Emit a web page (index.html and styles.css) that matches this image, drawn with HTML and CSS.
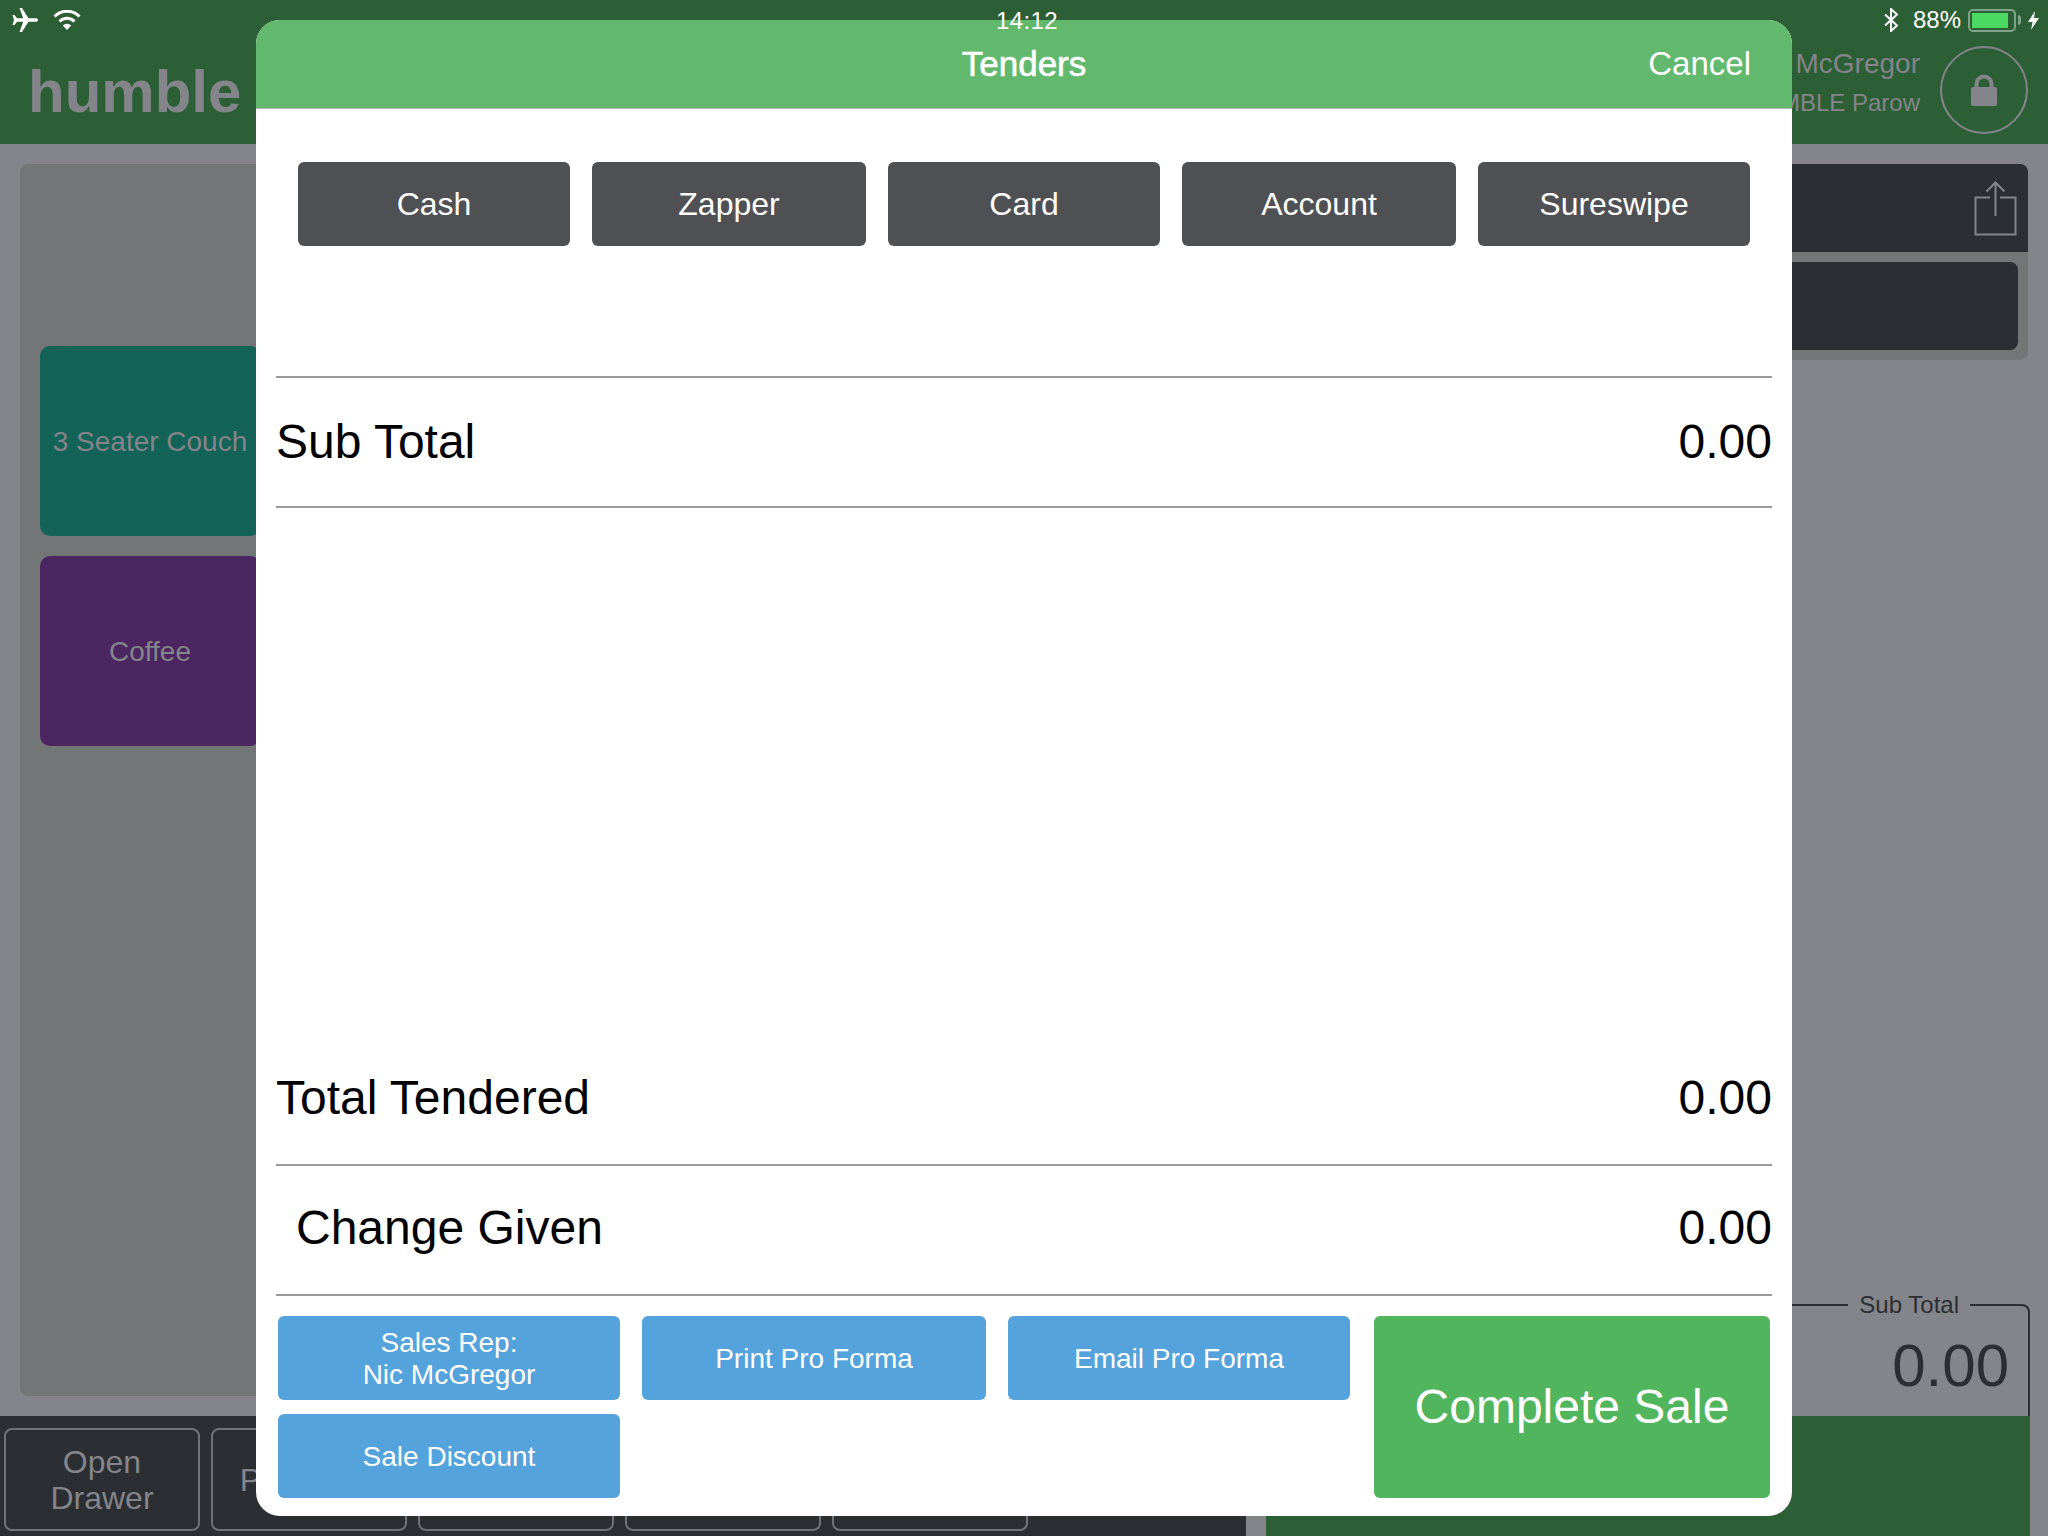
FILE: index.html
```html
<!DOCTYPE html>
<html>
<head>
<meta charset="utf-8">
<title>Tenders</title>
<link rel="stylesheet" href="styles.css">
</head>
<body>
<div class="app">

	<div class="topbar">
		<div class="brand">humble</div>
		<div class="user">
			<div class="user-name">Nic McGregor</div>
			<div class="user-store">HUMBLE Parow</div>
		</div>
		<div class="lock">
			<svg width="26" height="32" viewBox="0 0 26 32"><path d="M5.500 15V10a7.500 7.500 0 0 1 15 0v5" fill="none" stroke="#84858a" stroke-width="4"/><rect x="0" y="13" width="26" height="19" rx="2" fill="#84858a"/></svg>
		</div>
	</div>

	<div class="main">
		<div class="products">
			<div class="tile tile-teal">3 Seater Couch</div>
			<div class="tile tile-purple">Coffee</div>
		</div>
		<div class="side">
			<div class="side-head">
				<svg width="43" height="55" viewBox="0 0 43 55"><path d="M16 16.500H1.500V53.500H41.500V16.500H26M21.500 35V1.500M12.500 10.500l9-9 9 9" fill="none" stroke="#84858a" stroke-width="2"/></svg>
			</div>
			<div class="side-body"><div class="side-inner"></div></div>
			<div class="side-space"></div>
			<div class="subtotal">
				<div class="subtotal-label">Sub Total</div>
				<div class="subtotal-value">0.00</div>
			</div>
		</div>
	</div>

	<div class="bottom">
		<div class="actions">
			<div class="action">Open<br>Drawer</div>
			<div class="action">Park Sale</div>
			<div class="action"></div>
			<div class="action"></div>
			<div class="action"></div>
		</div>
		<div class="bottom-gap"></div>
		<div class="bottom-green"></div>
	</div>

	<!-- status bar sits over the modal -->
	<div class="status">
		<div class="status-left">
			<svg width="28" height="26" viewBox="0 0 28 26"><path d="M27 12.900c0-1-1-1.600-2.500-1.600h-7L11 1H8.500l3.700 10.300H6L3.500 8H1.500L3 13 1.500 18h2L6 14.700h6.200L8.500 25H11l6.500-10.300h7c1.500 0 2.500-.8 2.500-1.800z" fill="#fff"/></svg>
			<svg width="28" height="20" viewBox="0 0 28 20"><path d="M1.500 6.500a17.500 17.500 0 0 1 25 0M6.500 11.500a10.500 10.500 0 0 1 15 0" fill="none" stroke="#fff" stroke-width="3"/><path d="M14 20l-4.200-4.500a6 6 0 0 1 8.400 0z" fill="#fff"/></svg>
		</div>
		<div class="status-time">14:12</div>
		<div class="status-right">
			<svg class="bluetooth" width="16" height="24" viewBox="0 0 16 24"><path d="M2 6.500l12 11L8 23V1l6 5.500-12 11" fill="none" stroke="#fff" stroke-width="2"/></svg>
			<span class="status-pct">88%</span>
			<span class="battery-wrap">
				<span class="battery"><span class="battery-fill"></span></span>
				<span class="battery-nub"></span>
			</span>
			<svg width="11" height="19" viewBox="0 0 11 19"><path d="M7 0L0 11h4.500L3 19l8-12H6z" fill="#fff"/></svg>
		</div>
	</div>

	<div class="modal">
		<div class="modal-head">
			<div class="modal-title">Tenders</div>
			<div class="modal-cancel">Cancel</div>
		</div>
		<div class="modal-body">
			<div class="tenders">
				<div class="btn btn-dark">Cash</div>
				<div class="btn btn-dark">Zapper</div>
				<div class="btn btn-dark">Card</div>
				<div class="btn btn-dark">Account</div>
				<div class="btn btn-dark">Sureswipe</div>
			</div>
			<div class="line line-sub"><span>Sub Total</span><span>0.00</span></div>
			<div class="spacer"></div>
			<div class="line line-tendered"><span>Total Tendered</span><span>0.00</span></div>
			<div class="line line-change"><span>Change Given</span><span>0.00</span></div>
			<div class="footer">
				<div class="btn btn-blue">Sales Rep:<br>Nic McGregor</div>
				<div class="btn btn-blue">Print Pro Forma</div>
				<div class="btn btn-blue">Email Pro Forma</div>
				<div class="btn btn-green">Complete Sale</div>
				<div class="btn btn-blue">Sale Discount</div>
			</div>
		</div>
	</div>

</div>
</body>
</html>
```
FILE: styles.css
```css
* {
	box-sizing: border-box;
}

html, body {
	margin: 0;
	padding: 0;
}

body {
	font-family: "Liberation Sans", Arial, sans-serif;
	background: #84858a;
}

.app {
	position: relative;
	width: 2048px;
	height: 1536px;
	overflow: hidden;
	display: flex;
	flex-direction: column;
}

/* top bar */
.topbar {
	height: 144px;
	background: #2c5f36;
	display: flex;
	align-items: flex-end;
	padding: 0 20px 10px 28px;
	color: #84858a;
}

.brand {
	font-size: 60px;
	font-weight: bold;
	line-height: 72px;
	margin-bottom: 6px;
	flex: 1;
}

.user {
	text-align: right;
	margin-right: 20px;
	margin-bottom: 12px;
}

.user-name {
	font-size: 28px;
	line-height: 40px;
}

.user-store {
	font-size: 24px;
	line-height: 38px;
}

.lock {
	width: 88px;
	height: 88px;
	border: 2px solid #84858a;
	border-radius: 50%;
	display: flex;
	align-items: center;
	justify-content: center;
}

/* main area */
.main {
	height: 1272px;
	display: flex;
	padding: 20px;
}

.products {
	width: 1340px;
	height: 1232px;
	background: #727677;
	border-radius: 8px;
	padding: 182px 20px 0;
}

.tile {
	width: 220px;
	height: 190px;
	margin-bottom: 20px;
	padding-top: 2px;
	border-radius: 10px;
	color: #84858a;
	font-size: 28px;
	display: flex;
	align-items: center;
	justify-content: center;
}

.tile-teal {
	background: #136358;
}

.tile-purple {
	background: #4b2660;
}

.side {
	flex: 1;
	margin-left: 20px;
	display: flex;
	flex-direction: column;
}

.side-head {
	height: 88px;
	background: #2b2e33;
	border-radius: 8px 8px 0 0;
	display: flex;
	justify-content: flex-end;
	align-items: center;
	padding-right: 11px;
}

.side-body {
	height: 108px;
	background: #727677;
	border-radius: 0 0 8px 8px;
	padding: 10px;
}

.side-inner {
	height: 88px;
	background: #2b2e33;
	border-radius: 8px;
}

.side-space {
	flex: 1;
}

.subtotal {
	height: 112px;
	border: 2px solid #2b2e33;
	border-bottom: 0;
	border-radius: 0 8px 0 0;
	position: relative;
	margin-right: -2px;
	margin-bottom: -20px;
	text-align: right;
	padding-right: 19px;
	color: #2b2e33;
}

.subtotal-label {
	position: absolute;
	top: -14px;
	right: 58px;
	padding: 0 11px;
	background: #84858a;
	font-size: 24px;
	line-height: 26px;
}

.subtotal-value {
	font-size: 60px;
	line-height: 68px;
	margin-top: 26px;
}

/* bottom bar */
.bottom {
	height: 120px;
	display: flex;
	padding-right: 18px;
}

.actions {
	width: 1246px;
	background: #2b2e33;
	display: flex;
	gap: 11px;
	padding: 12px 4px 5px;
}

.action {
	width: 196px;
	border: 2px solid #6f7276;
	border-radius: 8px;
	color: #84858a;
	font-size: 32px;
	line-height: 36px;
	display: flex;
	align-items: center;
	justify-content: center;
	text-align: center;
}

.bottom-gap {
	width: 20px;
}

.bottom-green {
	flex: 1;
	background: #2c5f36;
}

/* status bar */
.status {
	position: absolute;
	top: 0;
	left: 0;
	right: 0;
	height: 40px;
	z-index: 5;
	display: flex;
	align-items: center;
	justify-content: space-between;
	padding: 0 9px 0 11px;
	color: #fff;
	font-size: 24px;
}

.status-left {
	display: flex;
	align-items: center;
	gap: 14px;
}

.status-right {
	display: flex;
	align-items: center;
	gap: 7px;
}

.bluetooth {
	margin-right: 7px;
}

.status-time {
	position: absolute;
	left: 996px;
	top: 7px;
	font-size: 24px;
	letter-spacing: 0.4px;
}

.battery-wrap {
	display: flex;
	align-items: center;
	gap: 2px;
}

.battery {
	width: 48px;
	height: 23px;
	border: 2px solid #7fa388;
	border-radius: 5px;
	padding: 2px;
	display: block;
}

.battery-fill {
	display: block;
	width: 36px;
	height: 15px;
	background: #4cd964;
}

.battery-nub {
	width: 3px;
	height: 10px;
	background: #7fa388;
	border-radius: 0 3px 3px 0;
}

/* tenders modal */
.modal {
	position: absolute;
	left: 256px;
	top: 20px;
	width: 1536px;
	height: 1496px;
	background: #fff;
	border-radius: 24px;
	overflow: hidden;
	z-index: 2;
	display: flex;
	flex-direction: column;
}

.modal-head {
	height: 89px;
	background: #62b96d;
	border-bottom: 1px solid #b2b2b2;
	color: #fff;
	display: flex;
	align-items: center;
	justify-content: center;
	position: relative;
}

.modal-title {
	font-size: 35px;
	-webkit-text-stroke: 0.6px #fff;
}

.modal-cancel {
	position: absolute;
	right: 41px;
	top: 25px;
	font-size: 33px;
}

.modal-body {
	flex: 1;
	display: flex;
	flex-direction: column;
	padding: 0 20px;
}

.btn {
	color: #fff;
	border-radius: 6px;
	display: flex;
	align-items: center;
	justify-content: center;
	text-align: center;
	line-height: 32px;
}

.btn-dark {
	background: #4f5054;
	font-size: 32px;
}

.btn-blue {
	background: #54a3dc;
	font-size: 28px;
	padding-top: 2px;
}

.btn-green {
	background: #50b55c;
	font-size: 48px;
	grid-row: span 2;
	margin-left: 2px;
}

.tenders {
	display: grid;
	grid-template-columns: 272px 274px 272px 274px 272px;
	gap: 22px;
	height: 84px;
	margin: 53px 22px 130px;
}

.line {
	display: flex;
	justify-content: space-between;
	align-items: center;
	font-size: 48px;
	color: #000;
}

.line-sub {
	height: 132px;
	padding-bottom: 2px;
	border-top: 2px solid #9b9b9b;
	border-bottom: 2px solid #9b9b9b;
}

.spacer {
	flex: 1;
}

.line-tendered {
	height: 130px;
	padding-bottom: 5px;
	border-bottom: 2px solid #9b9b9b;
}

.line-change {
	height: 130px;
	padding-bottom: 5px;
	padding-left: 20px;
	border-bottom: 2px solid #9b9b9b;
}

.footer {
	display: grid;
	grid-template-columns: 342px 344px 342px 398px;
	grid-template-rows: 84px 84px;
	gap: 14px 22px;
	margin: 20px 2px 18px 2px;
}
```
